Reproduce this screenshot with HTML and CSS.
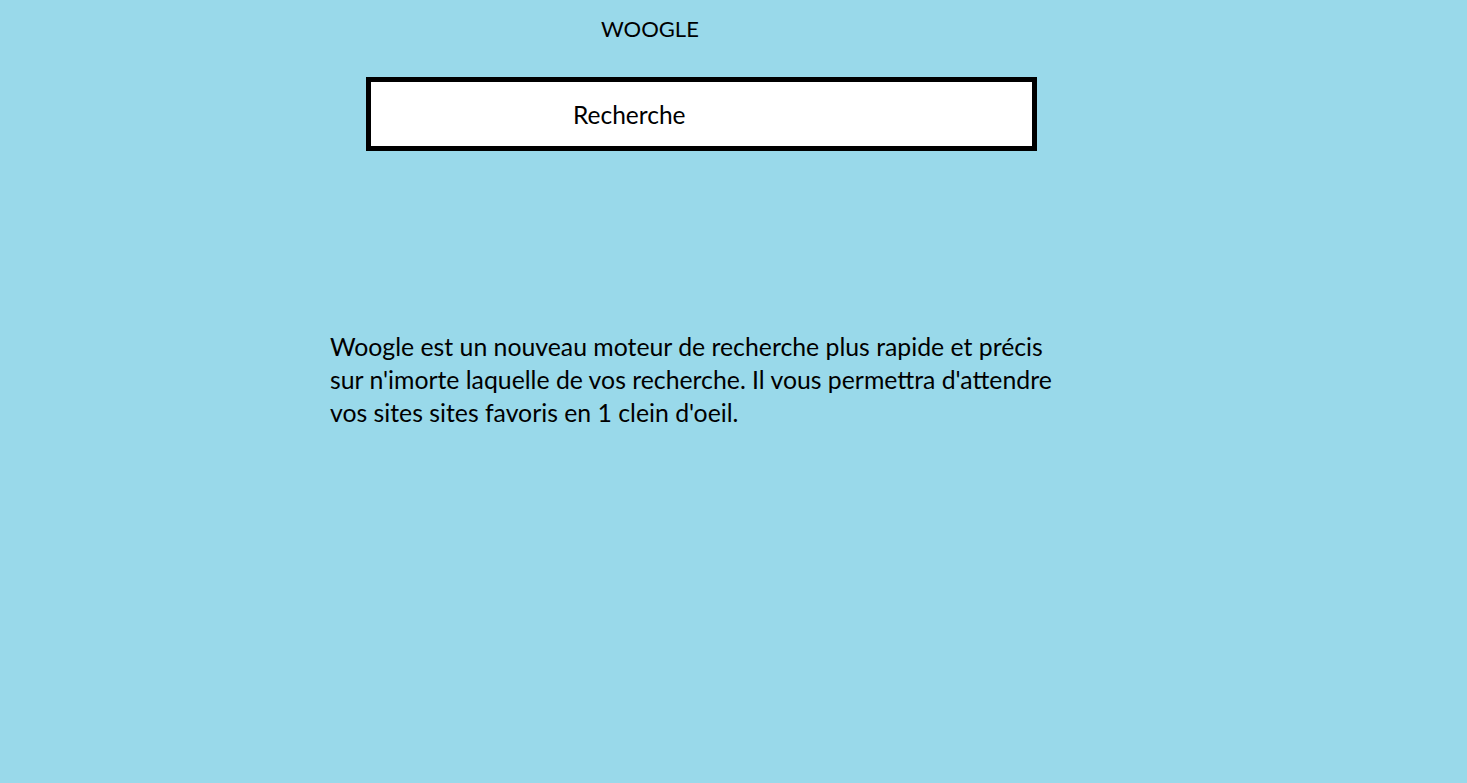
FILE: index.html
```html
<!DOCTYPE html>
<html lang="fr">
<head>
<meta charset="utf-8">
<title>Woogle</title>
<link rel="stylesheet" href="styles.css">
</head>
<body>
<div class="page">
  <h1 class="logo">WOOGLE</h1>
  <div class="search">Recherche</div>
  <p class="intro">Woogle est un nouveau moteur de recherche plus rapide et précis<br>sur n'imorte laquelle de vos recherche. Il vous permettra d'attendre<br>vos sites sites favoris en 1 clein d'oeil.</p>
</div>
</body>
</html>
```

FILE: styles.css
```css
html, body {
  margin: 0;
  padding: 0;
  background: #99d9ea;
}
.page {
  display: flex;
  flex-direction: column;
  align-items: flex-start;
  min-height: 783px;
  padding-top: 12px;
  box-sizing: border-box;
  font-family: Lato, "Open Sans", sans-serif;
  font-size: 23px;
  line-height: 33px;
  color: #000;
}
.logo {
  margin: 0 0 0 601px;
  font: inherit;
  font-size: 22px;
  font-weight: normal;
}
.search {
  margin: 32px 0 0 366px;
  box-sizing: content-box;
  border: 5px solid #000;
  background: #fff;
  padding: 16px 0 15px 202px;
  width: 459px;
  height: 33px;
  font-size: 24.5px;
}
.intro {
  margin: 179px 0 0 330px;
  font-size: 24.8px;
}
```
